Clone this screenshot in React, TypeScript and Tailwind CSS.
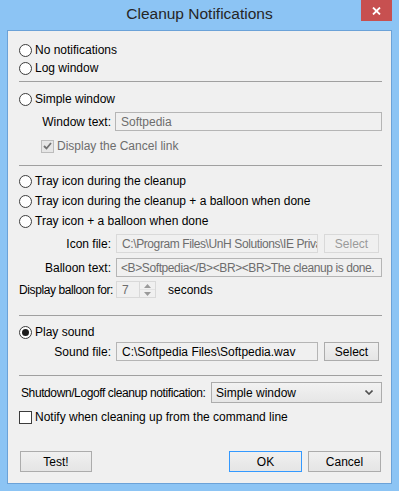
import React from "react";

const Radio: React.FC<{ checked?: boolean; label: string; h?: string }> = ({ checked, label, h = "h-[20px]" }) => (
  <div className={`${h} flex items-center`}>
    <div className="w-[13px] h-[13px] rounded-full border border-[#3c3c3c] bg-white flex items-center justify-center">
      {checked && <div className="w-[7px] h-[7px] rounded-full bg-[#1c1c1c]" />}
    </div>
    <span className="ml-[3px] whitespace-nowrap">{label}</span>
  </div>
);

const Label: React.FC<{ text: string }> = ({ text }) => (
  <span className="w-[93px] pr-[1px] text-right shrink-0 whitespace-nowrap">{text}</span>
);

const Sep = ({ mt }: { mt: string }) => <div className={`${mt} h-px bg-[#a0a0a0]`} />;

const App: React.FC = () => {
  return (
    <div
      className="w-[399px] h-[491px] bg-[#8cc4f4] flex flex-col text-[12px] leading-[16px] text-black"
      style={{ fontFamily: '"Liberation Sans", Arial, sans-serif' }}
    >
      {/* title bar */}
      <div className="h-[30px] relative flex items-center justify-center">
        <span className="text-[15.5px] text-[#262626] -mt-[2px]">Cleanup Notifications</span>
        <div className="absolute top-0 right-[7px] w-[31px] h-[21px] bg-[#c75050] flex items-center justify-center">
          <svg width="9" height="8" viewBox="0 0 9 8">
            <path d="M1 0.5 L8 7.5 M8 0.5 L1 7.5" stroke="white" strokeWidth="1.8" />
          </svg>
        </div>
      </div>

      <div className="mx-[7px] h-[454px] border border-[#6ba2d8] bg-[#f0f0f0] relative overflow-hidden">
        <div className="pl-[11px] pr-[9px] flex flex-col">
          <div className="mt-[10px]">
            <Radio h="h-[18px]" label="No notifications" />
            <Radio h="h-[18px]" label="Log window" />
          </div>
          <Sep mt="mt-[4px]" />

          <div className="mt-[8px]">
            <Radio h="h-[18px]" label="Simple window" />
          </div>
          <div className="mt-[4px] flex items-center">
            <Label text="Window text:" />
            <div className="ml-[3px] flex-1 h-[19px] border border-[#b5b5b5] flex items-center px-[5px] text-[#6d6d6d]">
              Softpedia
            </div>
          </div>
          <div className="mt-[6px] h-[18px] flex items-center pl-[22px] text-[#6d6d6d]">
            <div className="w-[13px] h-[13px] border border-[#bcbcbc] bg-[#e6e6e6] flex items-center justify-center">
              <svg width="9" height="8" viewBox="0 0 9 8">
                <path d="M1 4 L3.5 6.5 L8 1" stroke="#727272" strokeWidth="1.8" fill="none" />
              </svg>
            </div>
            <span className="ml-[3px]">Display the Cancel link</span>
          </div>
          <Sep mt="mt-[10px]" />

          <div className="mt-[5px]">
            <Radio label="Tray icon during the cleanup" />
            <Radio label="Tray icon during the cleanup + a balloon when done" />
            <Radio label="Tray icon + a balloon when done" />
          </div>
          <div className="mt-[3px] flex items-center">
            <Label text="Icon file:" />
            <div className="ml-[4px] w-[202px] h-[19px] border border-[#d9d9d9] flex items-center px-[5px] text-[#6d6d6d] whitespace-nowrap overflow-hidden tracking-[-0.4px]">
              C:\Program Files\UnH Solutions\IE Privac
            </div>
            <div className="ml-[6px] w-[55px] h-[19px] border border-[#d9d9d9] bg-[#f0f0f0] flex items-center justify-center text-[#9a9a9a]">
              Select
            </div>
          </div>
          <div className="mt-[5px] flex items-center">
            <Label text="Balloon text:" />
            <div className="ml-[4px] flex-1 h-[19px] border border-[#b5b5b5] flex items-center px-[4px] text-[#6d6d6d] whitespace-nowrap overflow-hidden tracking-[-0.4px]">
              {"<B>Softpedia</B><BR><BR>The cleanup is done."}
            </div>
          </div>
          <div className="mt-[4px] flex items-center">
            <span className="w-[94px] shrink-0 whitespace-nowrap tracking-[-0.4px]">Display balloon for:</span>
            <div className="ml-[3px] w-[40px] h-[17px] border border-[#d9d9d9] flex">
              <div className="flex-1 flex items-center px-[5px] text-[#6d6d6d]">7</div>
              <div className="w-[16px] border-l border-[#d9d9d9] flex flex-col">
                <div className="flex-1 flex items-center justify-center border-b border-[#e3e3e3]">
                  <svg width="7" height="4" viewBox="0 0 7 4">
                    <path d="M0 4 L3.5 0 L7 4 Z" fill="#9a9a9a" />
                  </svg>
                </div>
                <div className="flex-1 flex items-center justify-center">
                  <svg width="7" height="4" viewBox="0 0 7 4">
                    <path d="M0 0 L3.5 4 L7 0 Z" fill="#9a9a9a" />
                  </svg>
                </div>
              </div>
            </div>
            <span className="ml-[12px] mt-[1px]">seconds</span>
          </div>
          <Sep mt="mt-[17px]" />

          <div className="mt-[7px]">
            <Radio h="h-[18px]" checked label="Play sound" />
          </div>
          <div className="mt-[1px] flex items-center">
            <Label text="Sound file:" />
            <div className="ml-[4px] w-[202px] h-[19px] border border-[#b5b5b5] flex items-center px-[5px] whitespace-nowrap overflow-hidden">
              C:\Softpedia Files\Softpedia.wav
            </div>
            <div className="ml-[6px] w-[55px] h-[19px] border border-[#acacac] bg-gradient-to-b from-[#f0f0f0] to-[#e5e5e5] flex items-center justify-center">
              Select
            </div>
          </div>
          <Sep mt="mt-[14px]" />

          <div className="mt-[6px] flex items-center relative">
            <span className="ml-[2px] w-[190px] shrink-0 whitespace-nowrap tracking-[-0.4px]">Shutdown/Logoff cleanup notification:</span>
            <div className="flex-1 h-[21px] border border-[#acacac] bg-gradient-to-b from-[#f2f2f2] to-[#e6e6e6] flex items-center pl-[4px] pr-[8px]">
              <span className="flex-1">Simple window</span>
              <svg width="8" height="5" viewBox="0 0 8 5">
                <path d="M0.5 0.5 L4 4 L7.5 0.5" stroke="#505050" strokeWidth="1.6" fill="none" />
              </svg>
            </div>
          </div>
          <div className="mt-[5px] h-[18px] flex items-center">
            <div className="w-[13px] h-[13px] border border-[#3c3c3c] bg-white" />
            <span className="ml-[3px] whitespace-nowrap">Notify when cleaning up from the command line</span>
          </div>

          <div className="mt-[25px] flex items-center">
            <div className="ml-[1px] w-[72px] h-[21px] border border-[#acacac] bg-gradient-to-b from-[#f0f0f0] to-[#e5e5e5] flex items-center justify-center">
              Test!
            </div>
            <div className="ml-auto w-[73px] h-[21px] border border-[#3399ff] bg-gradient-to-b from-[#f0f0f0] to-[#e5e5e5] flex items-center justify-center">
              OK
            </div>
            <div className="ml-[6px] mr-[1px] w-[73px] h-[21px] border border-[#acacac] bg-gradient-to-b from-[#f0f0f0] to-[#e5e5e5] flex items-center justify-center">
              Cancel
            </div>
          </div>
        </div>
      </div>
    </div>
  );
};

export default App;
